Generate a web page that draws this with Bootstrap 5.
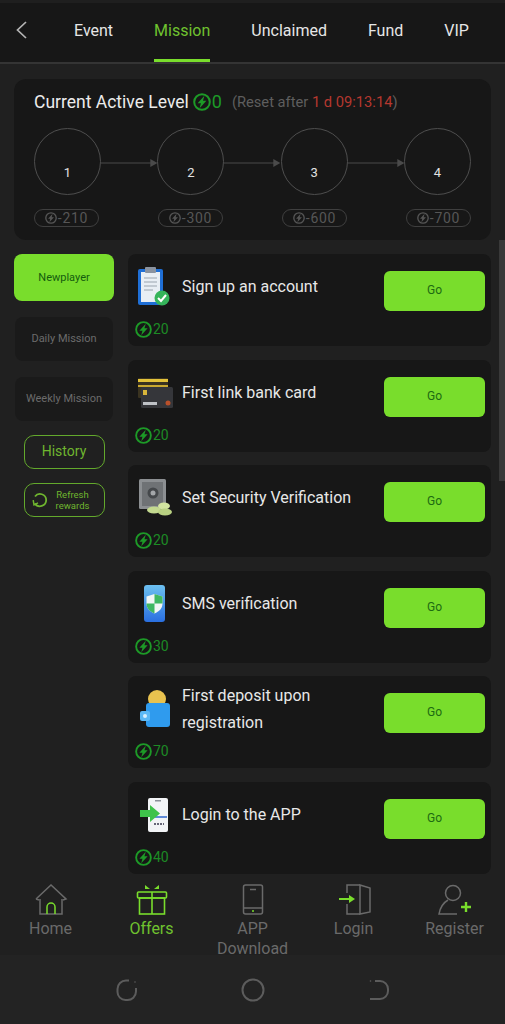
<!DOCTYPE html>
<html lang="en">
<head>
  <meta charset="UTF-8">
  <title>Mission</title>
  <link rel="stylesheet" href="https://cdn.jsdelivr.net/npm/bootstrap@5.3.3/dist/css/bootstrap.min.css">
  <style>
    html, body { height: 100%; }
    body { background: #202020; font-family: Roboto, "Liberation Sans", sans-serif; overflow: hidden; }
    .app { height: 1024px; width: 505px; }

    .top-bar { height: 64px; background: #171717; border-top: 3px solid #1f1f1f; border-bottom: 2px solid #343434; padding-left: 15px; flex: none; }
    .back-btn { width: 13px; height: 18px; margin-right: 46px; margin-top: -5px; }
    .tab-list { gap: 41px; height: 100%; }
    .tab-item { color: #e6e6e6; font-size: 16px; line-height: 56px; height: 59px; margin-bottom: -2px; }
    .tab-item.on { color: #6fc22f; border-bottom: 3px solid #79dd2c; }

    .scroll-area { flex: 1 1 auto; min-height: 0; overflow: hidden; position: relative; padding: 15px 14px 0; }
    .fake-scroll { position: absolute; right: 0; top: 176px; width: 6px; height: 241px; background: #393939; }

    .level-box { background: #171717; border-radius: 12px; height: 161px; padding: 11px 20px 0; margin-bottom: 14px; }
    .level-title { font-size: 17.5px; line-height: 24px; color: #ececec; height: 38px; padding-bottom: 14px; box-sizing: content-box; height: 24px; }
    .level-title .num { color: #1d9a27; margin-left: 1px; font-size: 18px; }
    .reset-txt { font-size: 14.7px; color: #5e5e5e; margin-left: 10px; }
    .reset-txt span { color: #b5382f; }
    .zap { width: 18px; height: 18px; flex: none; color: #1d9a27; }
    .steps { height: 67px; margin-bottom: 14px; }
    .step-circle { width: 67px; height: 67px; border: 1px solid #4e4e4e; border-radius: 50%; color: #e2e2e2; font-size: 13px; padding-top: 34px; line-height: 20px; flex: none; }
    .step-arrow { flex: 1 1 0; height: 8px; color: #4a4a4a; margin-top: 2px; }
    .pills { gap: 58px; }
    .cost-pill { width: 65px; height: 18px; border: 1px solid #3f3f3f; border-radius: 9px; color: #565656; font-size: 14px; line-height: 16px; letter-spacing: .7px; }
    .cost-pill .zap { width: 12px; height: 12px; color: #565656; margin-right: 1px; }

    .side-col { width: 100px; flex: none; }
    .side-btn { display: block; width: 98px; height: 44px; margin: 0 auto 16px; background: #1a1a1a; border-radius: 8px; color: #6b6b6b; font-size: 11px; line-height: 44px; text-align: center; }
    .side-btn.on { width: 100px; height: 47px; line-height: 47px; background: #79dd2c; color: #145c0e; }
    .side-btn.last { margin-bottom: 14px; }
    .side-outline { width: 81px; margin: 0 auto 14px; border: 1.5px solid #63a92c; border-radius: 10px; color: #6fb52f; }
    .side-outline.hist { height: 34px; font-size: 14px; line-height: 31px; text-align: center; }
    .side-outline.refresh { height: 34px; font-size: 9.5px; line-height: 11.5px; padding-left: 7px; gap: 8px; }
    .refresh svg { width: 16px; height: 16px; flex: none; }
    .refresh-label { width: 34px; }

    .task-list { width: 363px; margin-left: 14px; flex: none; gap: 13.6px; }
    .task-card { background: #171717; border-radius: 8px; height: 92px; flex: none; padding: 12px 6px 0 9px; }
    .task-top { height: 55px; }
    .task-pic { width: 36px; height: 40px; flex: none; margin-right: 9px; }
    .task-name { color: #e8e8e8; font-size: 16px; line-height: 27px; width: 193px; height: 54px; padding-top: 7px; }
    .task-name.two { padding-top: 0; margin-top: -6px; }
    .go-btn { width: 101px; height: 40px; background: #79dd2c; color: #1d6b12; font-size: 12px; border-radius: 6px; padding: 0 0 2px; border: 0; margin-top: 5px; margin-left: auto; }
    .go-btn:hover { background: #79dd2c; color: #1d6b12; }
    .task-gain { color: #1d8a25; font-size: 14px; line-height: 17px; margin-left: -2px; }
    .task-gain .zap { width: 17px; height: 17px; margin-right: 1px; }

    .bottom-nav { height: 81px; background: #202020; flex: none; padding-top: 10px; position: relative; }
    .nav-cell { width: 101px; color: #6a6a6a; font-size: 16px; line-height: 20px; text-align: center; }
    .nav-cell.on { color: #6fc22f; }
    .nav-cell svg { display: block; margin: 0 auto 3px; width: 36px; height: 32px; }
    .sys-bar { height: 69px; background: #232323; flex: none; gap: 102px; padding-top: 1px; }
    .sys-bar svg { width: 24px; height: 24px; color: #5c5c5c; }
  </style>
</head>
<body>
  <svg width="0" height="0" class="position-absolute">
    <defs>
      <linearGradient id="blueFade" x1="0" y1="0" x2="0" y2="1"><stop offset="0" stop-color="#6cc0f0"/><stop offset="1" stop-color="#2a6fe0"/></linearGradient>
    </defs>
    <symbol id="zap" viewBox="0 0 18 18">
      <circle cx="9" cy="9" r="7.8" fill="none" stroke="currentColor" stroke-width="2"/>
      <path d="M11.4 2.800 4.600 10.200h3.300l-1.300 5 6.800-7.400H10z" fill="currentColor"/>
    </symbol>
    <symbol id="arrow" viewBox="0 0 56 8" preserveAspectRatio="none">
      <path d="M0 4h50" stroke="currentColor" stroke-width="1" fill="none"/>
      <path d="M49 0l7 4-7 4z" fill="currentColor"/>
    </symbol>
  </svg>

  <div class="app d-flex flex-column">
    <div class="top-bar d-flex align-items-center">
      <svg class="back-btn" viewBox="0 0 13 18"><path d="M11 1 2.500 9l8.500 8" fill="none" stroke="#b5b5b5" stroke-width="1.700"/></svg>
      <div class="tab-list d-flex">
        <div class="tab-item">Event</div>
        <div class="tab-item on">Mission</div>
        <div class="tab-item">Unclaimed</div>
        <div class="tab-item">Fund</div>
        <div class="tab-item">VIP</div>
      </div>
    </div>

    <div class="scroll-area">
      <div class="fake-scroll"></div>

      <div class="level-box">
        <div class="level-title d-flex align-items-center">
          Current Active Level
          <svg class="zap ms-1"><use href="#zap"/></svg>
          <span class="num">0</span>
          <span class="reset-txt">(Reset after <span>1 d 09:13:14</span>)</span>
        </div>
        <div class="steps d-flex align-items-center">
          <div class="step-circle text-center">1</div>
          <svg class="step-arrow"><use href="#arrow"/></svg>
          <div class="step-circle text-center">2</div>
          <svg class="step-arrow"><use href="#arrow"/></svg>
          <div class="step-circle text-center">3</div>
          <svg class="step-arrow"><use href="#arrow"/></svg>
          <div class="step-circle text-center">4</div>
        </div>
        <div class="pills d-flex justify-content-between">
          <div class="cost-pill d-flex align-items-center justify-content-center"><svg class="zap"><use href="#zap"/></svg>-210</div>
          <div class="cost-pill d-flex align-items-center justify-content-center"><svg class="zap"><use href="#zap"/></svg>-300</div>
          <div class="cost-pill d-flex align-items-center justify-content-center"><svg class="zap"><use href="#zap"/></svg>-600</div>
          <div class="cost-pill d-flex align-items-center justify-content-center"><svg class="zap"><use href="#zap"/></svg>-700</div>
        </div>
      </div>

      <div class="d-flex align-items-start">
        <div class="side-col">
          <div class="side-btn on">Newplayer</div>
          <div class="side-btn">Daily Mission</div>
          <div class="side-btn last">Weekly Mission</div>
          <div class="side-outline hist">History</div>
          <div class="side-outline refresh d-flex align-items-center">
            <svg viewBox="0 0 16 16" fill="none" stroke="#6fb52f" stroke-width="1.800"><path d="M3 4.500A6.200 6.200 0 0 1 14.200 8a6.200 6.200 0 0 1-11.400 3.400"/><path d="M1.200 8.200 2 12.800l4-2" stroke-width="1.500"/></svg>
            <div class="refresh-label text-center">Refresh rewards</div>
          </div>
        </div>

        <div class="task-list d-flex flex-column">
          <div class="task-card">
            <div class="task-top d-flex">
              <svg class="task-pic" viewBox="0 0 36 40">
                <rect x="1" y="3" width="25" height="36" rx="2" fill="#1f6fd6"/>
                <rect x="4" y="6" width="19" height="30" fill="#e8eef4"/>
                <rect x="8" y="1" width="11" height="6" rx="1" fill="#8a93a0"/>
                <path d="M7 12h13M7 16h13M7 20h13M7 24h9" stroke="#9aa4ae" stroke-width="1.200"/>
                <circle cx="25" cy="32" r="7.500" fill="#35b45a"/>
                <path d="M21 32l3 3 5-6" fill="none" stroke="#fff" stroke-width="2"/>
              </svg>
              <div class="task-name">Sign up an account</div>
              <button class="btn go-btn">Go</button>
            </div>
            <div class="task-gain d-flex align-items-center"><svg class="zap"><use href="#zap"/></svg>20</div>
          </div>

          <div class="task-card">
            <div class="task-top d-flex">
              <svg class="task-pic" viewBox="0 0 36 40">
                <rect x="1" y="6" width="30" height="20" rx="1" fill="#3a3320"/>
                <rect x="1" y="7" width="30" height="3" fill="#e3c23a"/>
                <rect x="1" y="13" width="30" height="2" fill="#c9a830"/>
                <rect x="4" y="15" width="32" height="21" rx="1.500" fill="#35363a"/>
                <rect x="6" y="18" width="4" height="5" fill="#d8b53a"/>
                <rect x="6" y="30" width="14" height="3" fill="#bfc2c6"/>
                <circle cx="31" cy="31" r="2.500" fill="#b9502a"/>
              </svg>
              <div class="task-name">First link bank card</div>
              <button class="btn go-btn">Go</button>
            </div>
            <div class="task-gain d-flex align-items-center"><svg class="zap"><use href="#zap"/></svg>20</div>
          </div>

          <div class="task-card">
            <div class="task-top d-flex">
              <svg class="task-pic" viewBox="0 0 36 40">
                <rect x="2" y="2" width="27" height="30" rx="1.500" fill="#8c8f92"/>
                <rect x="5" y="5" width="21" height="24" fill="#6f7275"/>
                <circle cx="16" cy="16" r="5.500" fill="#45484b"/>
                <circle cx="16" cy="16" r="2.500" fill="#a4a7aa"/>
                <ellipse cx="17" cy="33" rx="7" ry="3.500" fill="#c3d98f"/>
                <ellipse cx="27" cy="29" rx="6" ry="3.500" fill="#d3e5a0"/>
                <ellipse cx="28" cy="35" rx="7" ry="3.500" fill="#b9d182"/>
              </svg>
              <div class="task-name">Set Security Verification</div>
              <button class="btn go-btn">Go</button>
            </div>
            <div class="task-gain d-flex align-items-center"><svg class="zap"><use href="#zap"/></svg>20</div>
          </div>

          <div class="task-card">
            <div class="task-top d-flex">
              <svg class="task-pic" viewBox="0 0 36 40">
                <rect x="7" y="2" width="21" height="37" rx="3" fill="url(#blueFade)"/>
                <path d="M17.500 11l8 2.500v7c0 5-3.500 8-8 10-4.500-2-8-5-8-10v-7z" fill="#f2f6f4"/>
                <path d="M17.500 11l8 2.500v7h-8zM17.500 20.500v10c-4.500-2-8-5-8-10z" fill="#3fb862"/>
              </svg>
              <div class="task-name">SMS verification</div>
              <button class="btn go-btn">Go</button>
            </div>
            <div class="task-gain d-flex align-items-center"><svg class="zap"><use href="#zap"/></svg>30</div>
          </div>

          <div class="task-card">
            <div class="task-top d-flex">
              <svg class="task-pic" viewBox="0 0 36 40">
                <circle cx="20" cy="11" r="9" fill="#e8c24f"/>
                <rect x="9" y="15" width="24" height="24" rx="3" fill="#2f9bee"/>
                <rect x="3" y="23" width="10" height="10" rx="2" fill="#5bb8f5"/>
                <circle cx="8" cy="28" r="2" fill="#d5eefc"/>
              </svg>
              <div class="task-name two">First deposit upon registration</div>
              <button class="btn go-btn">Go</button>
            </div>
            <div class="task-gain d-flex align-items-center"><svg class="zap"><use href="#zap"/></svg>70</div>
          </div>

          <div class="task-card">
            <div class="task-top d-flex">
              <svg class="task-pic" viewBox="0 0 36 40">
                <rect x="11" y="4" width="20" height="34" rx="2" fill="#f2f4f6"/>
                <rect x="18" y="6" width="6" height="1.500" fill="#8a9098"/>
                <path d="M18 23h12" stroke="#3a6fd0" stroke-width="1.600"/>
                <path d="M17 30h10" stroke="#667" stroke-width="2" stroke-dasharray="2 1"/>
                <path d="M3 16h10v-5l10 8.500-10 8.500v-5H3z" fill="#3ec24a"/>
              </svg>
              <div class="task-name">Login to the APP</div>
              <button class="btn go-btn">Go</button>
            </div>
            <div class="task-gain d-flex align-items-center"><svg class="zap"><use href="#zap"/></svg>40</div>
          </div>
        </div>
      </div>
    </div>

    <div class="bottom-nav d-flex">
      <div class="nav-cell">
        <svg viewBox="0 0 36 32" fill="none" stroke="#6a6a6a" stroke-width="1.500">
          <path d="M3 15 18 1l15 14-3 1"/><path d="M3 15l3 1"/><path d="M7 15v15h22V15"/>
          <path d="M14 30v-7a4 4 0 0 1 8 0v7" stroke="#79dd2c"/>
        </svg>
        Home
      </div>
      <div class="nav-cell on">
        <svg viewBox="0 0 36 32" fill="none" stroke="#79dd2c" stroke-width="1.600">
          <rect x="3.500" y="8" width="29" height="6" rx="1"/><rect x="5.500" y="14" width="25" height="16"/>
          <path d="M18 8v22"/><path d="M11 1l5 4h-5zM25 1l-5 4h5z" fill="#79dd2c" stroke="none"/>
        </svg>
        Offers
      </div>
      <div class="nav-cell">
        <svg viewBox="0 0 36 32" fill="none" stroke="#6a6a6a" stroke-width="1.500">
          <rect x="8.500" y="1" width="19" height="29" rx="2"/><path d="M8.500 24h19M15 5.500h6"/>
          <circle cx="18" cy="27" r="1" fill="#79dd2c" stroke="none"/>
        </svg>
        APP<br>Download
      </div>
      <div class="nav-cell">
        <svg viewBox="0 0 36 32" fill="none" stroke="#6a6a6a" stroke-width="1.500">
          <path d="M11 9V1h13M11 20v10h13"/><path d="M24 1l10 3v24l-10 2z"/>
          <path d="M3 15h12" stroke="#79dd2c" stroke-width="2"/><path d="M13 11l6 4-6 4z" fill="#79dd2c" stroke="none"/>
        </svg>
        Login
      </div>
      <div class="nav-cell">
        <svg viewBox="0 0 36 32" fill="none" stroke="#6a6a6a" stroke-width="1.500">
          <circle cx="16" cy="9" r="7.500"/><path d="M11 16c-5 3-8 8-9 14h18"/>
          <path d="M24 23h10M29 18v10" stroke="#79dd2c" stroke-width="2.400"/>
        </svg>
        Register
      </div>
    </div>

    <div class="sys-bar d-flex align-items-center justify-content-center">
      <svg viewBox="0 0 24 24" fill="none" stroke="currentColor" stroke-width="2"><path d="M14 2.500H11A8.500 8.500 0 0 0 2.500 11v3a8 8 0 0 0 8 8H12a8.500 8.500 0 0 0 9-8.500V10"/><circle cx="20" cy="4" r=".8" fill="currentColor" stroke="none"/></svg>
      <svg viewBox="0 0 24 24" fill="none" stroke="currentColor" stroke-width="2"><circle cx="12" cy="12" r="10.500"/></svg>
      <svg viewBox="0 0 24 24" fill="none" stroke="currentColor" stroke-width="2"><path d="M8 3h5a8 8 0 0 1 8 8v2a8 8 0 0 1-8 8H3"/><circle cx="3.500" cy="3" r=".8" fill="currentColor" stroke="none"/></svg>
    </div>
  </div>
</body>
</html>
